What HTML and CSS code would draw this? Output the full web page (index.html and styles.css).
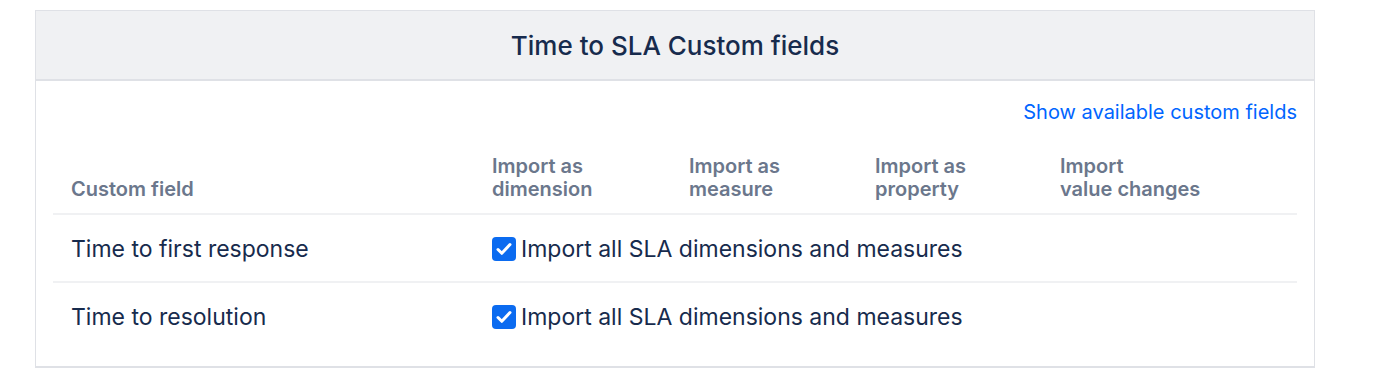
FILE: index.html
```html
<!DOCTYPE html>
<html lang="en">
<head>
  <meta charset="UTF-8">
  <title>Time to SLA Custom fields</title>
  <link rel="stylesheet" href="styles.css">
</head>
<body>
  <div class="painel">
    <div class="painel-topo">
      <h2>Time to SLA Custom fields</h2>
    </div>
    <div class="painel-corpo">
      <div class="acoes">
        <a href="#" class="link">Show available custom fields</a>
      </div>
      <table>
        <thead>
          <tr>
            <th class="col-nome">Custom field</th>
            <th class="col-dim">Import as<br>dimension</th>
            <th class="col-med">Import as<br>measure</th>
            <th class="col-prop">Import as<br>property</th>
            <th class="col-val">Import<br>value changes</th>
          </tr>
        </thead>
        <tbody>
          <tr>
            <td>Time to first response</td>
            <td colspan="4">
              <label class="check"><span class="caixa"><svg viewBox="0 0 24 24" width="24" height="24"><path d="M6 12.5l3.8 3.8L18 7.5" fill="none" stroke="#fff" stroke-width="3" stroke-linecap="round" stroke-linejoin="round"/></svg></span>Import all SLA dimensions and measures</label>
            </td>
          </tr>
          <tr>
            <td>Time to resolution</td>
            <td colspan="4">
              <label class="check"><span class="caixa"><svg viewBox="0 0 24 24" width="24" height="24"><path d="M6 12.5l3.8 3.8L18 7.5" fill="none" stroke="#fff" stroke-width="3" stroke-linecap="round" stroke-linejoin="round"/></svg></span>Import all SLA dimensions and measures</label>
            </td>
          </tr>
        </tbody>
      </table>
    </div>
  </div>
</body>
</html>
```

FILE: styles.css
```css
body {
  margin: 0;
  padding: 10px 0 0 35px;
  font-family: 'Inter', 'Noto Sans', sans-serif;
  color: #172b4d;
  background-color: #fff;
}

.painel {
  width: 1278px;
  border: 1px solid #dfe1e6;
  border-bottom-width: 2px;
}

.painel-topo {
  background-color: #f0f1f3;
  border-bottom: 2px solid #dfe1e6;
  height: 68px;
  display: flex;
  align-items: center;
  justify-content: center;
}

.painel-topo h2 {
  margin: 0;
  font-size: 26px;
  font-weight: 500;
  color: #172b4d;
}

.painel-corpo {
  padding: 0 17px 17px 17px;
}

.acoes {
  display: flex;
  justify-content: flex-end;
  padding-top: 19px;
  height: 55px;
}

.link {
  color: #0065ff;
  text-decoration: none;
  font-size: 20px;
}

table {
  width: 1244px;
  border-collapse: collapse;
  table-layout: fixed;
}

th {
  text-align: left;
  vertical-align: bottom;
  color: #6b778c;
  font-size: 20px;
  font-weight: 600;
  line-height: 23px;
  padding: 0 18px 12px 18px;
  border-bottom: 2px solid #f0f1f3;
}

.col-nome { width: 385px; }
.col-dim { width: 161px; }
.col-med { width: 150px; }
.col-prop { width: 149px; }

td {
  font-size: 23px;
  height: 64px;
  padding: 2px 18px 0 18px;
  vertical-align: middle;
  border-bottom: 2px solid #f0f1f3;
}

tbody tr:last-child td {
  border-bottom: none;
}

.check {
  display: flex;
  align-items: center;
  gap: 5px;
}

.caixa {
  width: 24px;
  height: 24px;
  border-radius: 4px;
  background-color: #0b6bf0;
  display: flex;
}
```
